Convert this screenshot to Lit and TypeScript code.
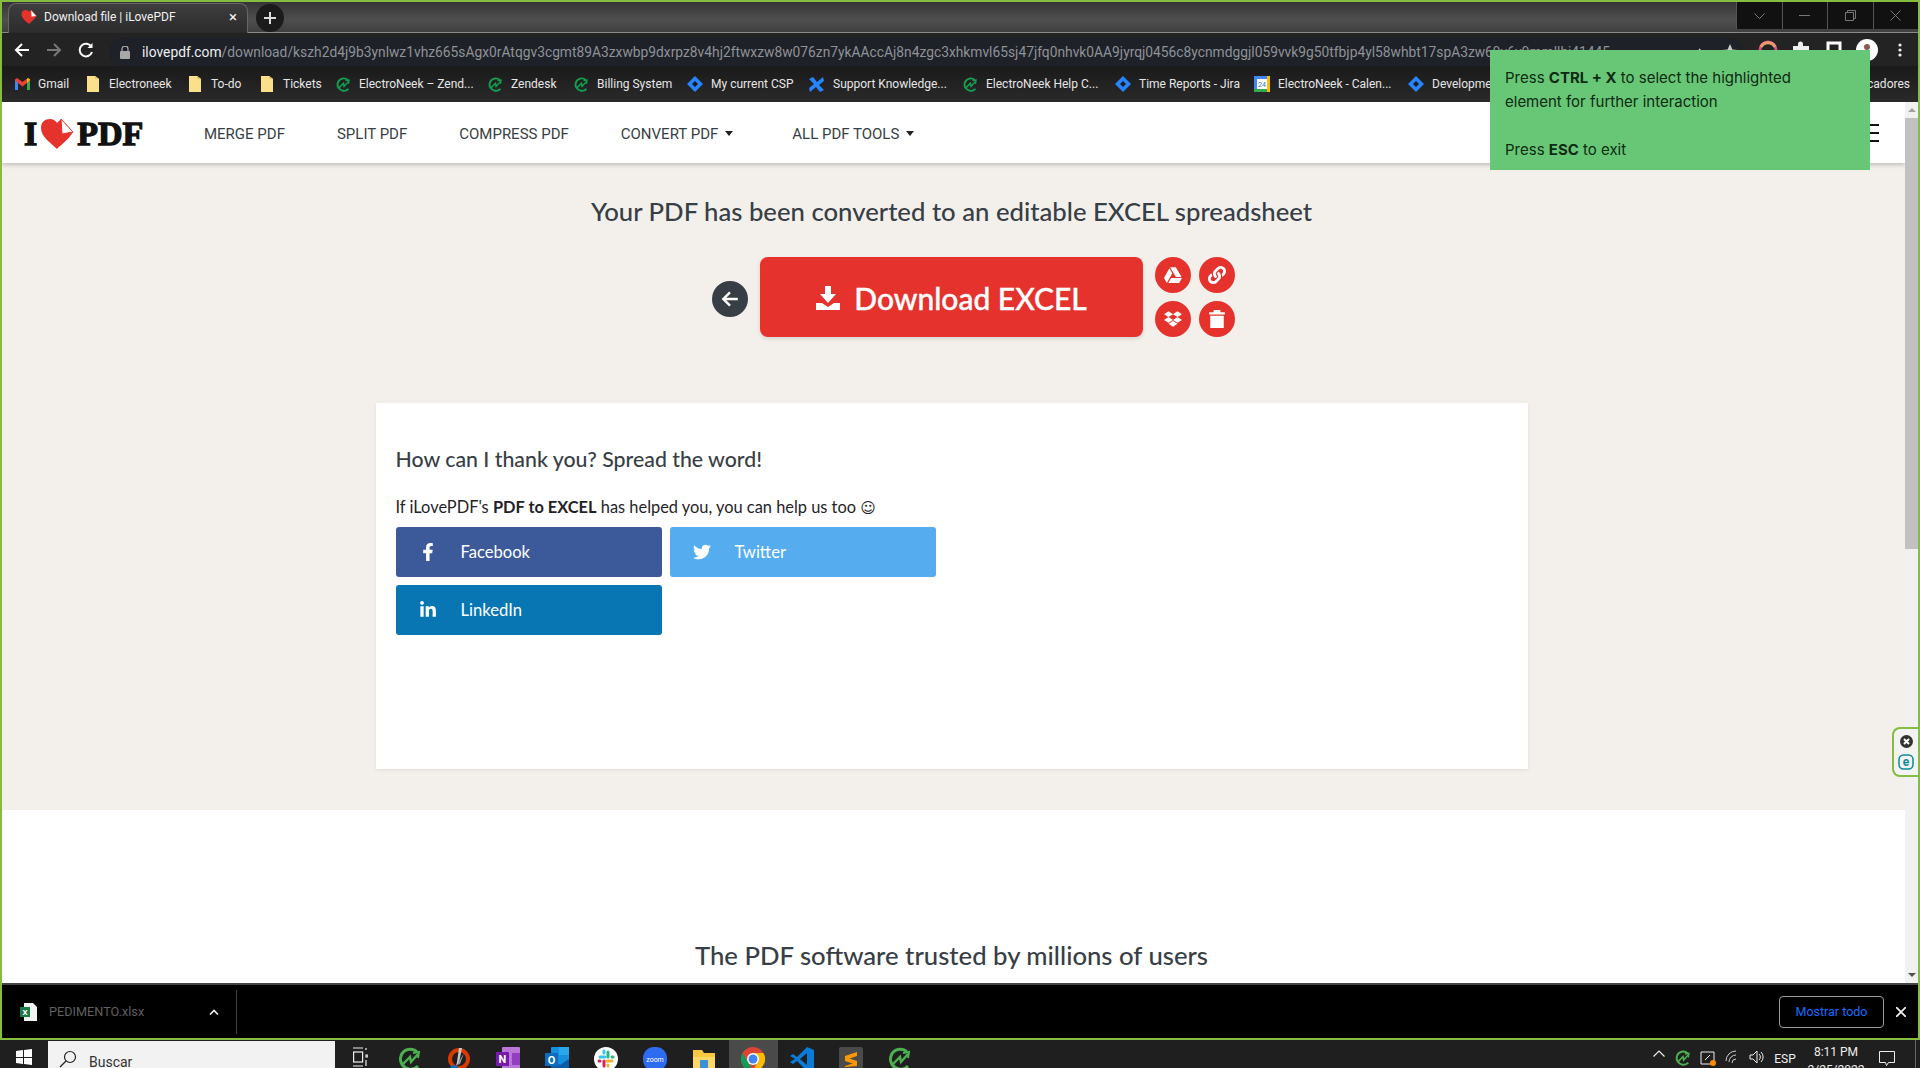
import { LitElement, html, css, svg } from 'lit';
import { customElement } from 'lit/decorators.js';

const URL_PATH =
  '/download/kszh2d4j9b3ynlwz1vhz665sAgx0rAtqgv3cgmt89A3zxwbp9dxrpz8v4hj2ftwxzw8w076zn7ykAAccAj8n4zgc3xhkmvl65sj47jfq0nhvk0AA9jyrqj0456c8ycnmdggjl059vvk9g50tfbjp4yl58whbt17spA3zw69v6v9mmllhj41445';

const ICON_FB =
  'M279.14 288l14.22-92.66h-88.91v-60.13c0-25.35 12.42-50.06 52.24-50.06h40.42V6.26S260.43 0 225.36 0c-73.22 0-121.08 44.38-121.08 124.72v70.62H22.89V288h81.39v224h100.17V288z';
const ICON_TW =
  'M459.37 151.716c.325 4.548.325 9.097.325 13.645 0 138.72-105.583 298.558-298.558 298.558-59.452 0-114.68-17.219-161.137-47.106 8.447.974 16.568 1.299 25.34 1.299 49.055 0 94.213-16.568 130.274-44.832-46.132-.975-84.792-31.188-98.112-72.772 6.498.974 12.995 1.624 19.818 1.624 9.421 0 18.843-1.3 27.614-3.573-48.081-9.747-84.143-51.98-84.143-102.985v-1.299c13.969 7.797 30.214 12.67 47.431 13.319-28.264-18.843-46.781-51.005-46.781-87.391 0-19.492 5.197-37.36 14.294-52.954 51.655 63.675 129.3 105.258 216.365 109.807-1.624-7.797-2.599-15.918-2.599-24.04 0-57.828 46.782-104.934 104.934-104.934 30.213 0 57.502 12.67 76.67 33.137 23.715-4.548 46.456-13.32 66.599-25.34-7.798 24.366-24.366 44.833-46.132 57.827 21.117-2.273 41.584-8.122 60.426-16.243-14.292 20.791-32.161 39.308-52.628 54.253z';
const ICON_IN =
  'M100.28 448H7.4V148.9h92.88zM53.79 108.1C24.09 108.1 0 83.5 0 53.8a53.79 53.79 0 0 1 107.58 0c0 29.7-24.1 54.3-53.79 54.3zM447.9 448h-92.68V302.4c0-34.7-.7-79.2-48.29-79.2-48.29 0-55.69 37.7-55.69 76.7V448h-92.78V148.9h89.08v40.8h1.3c12.4-23.5 42.69-48.3 87.88-48.3 94 0 111.28 61.9 111.28 142.3V448z';
const ICON_DRIVE =
  'M339 314.9L175.4 32h161.2l163.6 282.9H339zm-137.5 23.6L120.9 480h310.5L512 338.5H201.5zM154.1 67.4L0 338.5 80.6 480 237 208.8 154.1 67.4z';
const ICON_DROPBOX =
  'M264.4 116.3l-132 84.3 132 84.3-132 84.3L0 284.1l132.3-84.3L0 116.3 132.3 32l132.1 84.3zM131.6 395.7l132-84.3 132 84.3-132 84.3-132-84.3zm132.8-111.6l132-84.3-132-83.6L395.7 32 528 116.3l-132.3 84.3L528 284.8l-132.3 84.3-131.3-85z';
const ICON_LINK =
  'M326.612 185.391c59.747 59.809 58.927 155.698.36 214.59-.11.12-.24.25-.36.37l-67.2 67.2c-59.27 59.27-155.699 59.262-214.96 0-59.27-59.26-59.27-155.7 0-214.96l37.106-37.106c9.84-9.84 26.786-3.3 27.294 10.606.648 17.722 3.826 35.527 9.69 52.721 1.986 5.822.567 12.262-3.783 16.612l-13.087 13.087c-28.026 28.026-28.905 73.66-1.155 101.96 28.024 28.579 74.086 28.749 102.325.51l67.2-67.19c28.191-28.191 28.073-73.757 0-101.83-3.701-3.694-7.429-6.564-10.341-8.569a16.037 16.037 0 0 1-6.947-12.606c-.396-10.567 3.348-21.456 11.698-29.806l21.054-21.055c5.521-5.521 14.182-6.199 20.584-1.731a152.482 152.482 0 0 1 20.522 17.197zM467.547 44.449c-59.261-59.262-155.69-59.27-214.96 0l-67.2 67.2c-.12.12-.25.25-.36.37-58.566 58.892-59.387 154.781.36 214.59a152.454 152.454 0 0 0 20.521 17.196c6.402 4.468 15.064 3.789 20.584-1.731l21.054-21.055c8.35-8.35 12.094-19.239 11.698-29.806a16.037 16.037 0 0 0-6.947-12.606c-2.912-2.005-6.64-4.875-10.341-8.569-28.073-28.073-28.191-73.639 0-101.83l67.2-67.19c28.239-28.239 74.3-28.069 102.325.51 27.75 28.3 26.872 73.934-1.155 101.96l-13.087 13.087c-4.35 4.35-5.769 10.79-3.783 16.612 5.864 17.194 9.042 34.999 9.69 52.721.509 13.906 17.454 20.446 27.294 10.606l37.106-37.106c59.271-59.259 59.271-155.699.001-214.959z';

const heart = (s: number) => html`<svg width=${s} height=${s} viewBox="0 0 34 34">
  <path d="M17 32 C11 26 1 20 1 11 C1 5 5 2 10 2 C13 2 16 4 17 6 L21 2 L33 15 C29 22 22 27 17 32Z" fill="#e5322d"/>
  <path d="M21 2 L33 15 L22 17Z" fill="#fff" stroke="#e5322d" stroke-width="1"/>
</svg>`;

const neek = (s: number, c: string) => html`<svg width=${s} height=${s} viewBox="0 0 24 24" fill="none" stroke=${c} stroke-width="3">
  <path d="M19 5 C14 0 5 2 3 9 C1 15 5 21 11 22 C15 23 18 21 20 19"/>
  <path d="M5 17 L12 10 L13 15 L20 7" stroke-width="2.4"/>
  <path d="M15 6 L21 5 L20 11" stroke-width="2"/>
</svg>`;

const folder = html`<svg class="wide" width="12" height="18" viewBox="0 0 12 18"><path d="M0 1h8l4 3v13H0z" fill="#fbe08b"/><path d="M8 1v3h4z" fill="#e8c766"/></svg>`;
const diamond = html`<svg width="16" height="16" viewBox="0 0 16 16"><path d="M8 0l8 8-8 8-8-8z" fill="#2684ff"/><path d="M8 5l3 3-3 3-3-3z" fill="#1b1b1b"/></svg>`;
const gmail = html`<svg width="15" height="12" viewBox="0 0 15 12"><path d="M0 1.5V12h3V5l4.5 3.5L12 5v7h3V1.5L13 0 7.5 4 2 0z" fill="#ea4335"/><path d="M0 2v10h3V5z" fill="#4285f4"/><path d="M12 5v7h3V2z" fill="#34a853"/><path d="M13 0l2 1.5V2l-3 3V1z" fill="#fbbc04"/></svg>`;
const confluence = html`<svg width="17" height="17" viewBox="0 0 17 17"><path d="M1 3l4-2 4 5 6-5 1 4-5 4 5 5-4 2-4-5-6 5-1-4 5-4z" fill="#2684ff"/></svg>`;
const calendar = html`<svg width="16" height="16" viewBox="0 0 16 16"><rect width="16" height="16" fill="#4285f4"/><rect x="3" y="3" width="10" height="10" fill="#fff"/><rect x="13" width="3" height="16" fill="#fbbc04"/><rect y="13" width="13" height="3" fill="#34a853"/><text x="8" y="11" font-size="7" font-family="Roboto" fill="#1a73e8" text-anchor="middle">24</text></svg>`;

const BOOKMARKS = [
  { w: 72, icon: gmail, label: 'Gmail' },
  { w: 102, icon: folder, label: 'Electroneek' },
  { w: 72, icon: folder, label: 'To-do' },
  { w: 75, icon: folder, label: 'Tickets' },
  { w: 152, icon: neek(15, '#12a150'), label: 'ElectroNeek – Zend...' },
  { w: 86, icon: neek(15, '#12a150'), label: 'Zendesk' },
  { w: 113, icon: neek(15, '#12a150'), label: 'Billing System' },
  { w: 121, icon: diamond, label: 'My current CSP' },
  { w: 155, icon: confluence, label: 'Support Knowledge...' },
  { w: 152, icon: neek(15, '#12a150'), label: 'ElectroNeek Help C...' },
  { w: 139, icon: diamond, label: 'Time Reports - Jira' },
  { w: 154, icon: calendar, label: 'ElectroNeek - Calen...' },
  { w: 58, icon: diamond, label: 'Development' },
];

const TASK_ICONS = [
  neek(24, '#4caf50'),
  html`<svg width="24" height="24" viewBox="0 0 24 24"><circle cx="12" cy="12" r="9" fill="none" stroke="#d83b01" stroke-width="4"/><path d="M15 1l-3 15-3 3 1-4 2-14z" fill="#c8c8c8"/><path d="M17 6l-4 11-3 1z" fill="#9a9a9a"/><circle cx="7" cy="22" r="4" fill="#0f6cbd"/></svg>`,
  html`<svg width="24" height="24" viewBox="0 0 24 24"><rect x="6" width="18" height="24" rx="1" fill="#ba77d8"/><rect x="16" y="6" width="8" height="12" fill="#8f3fc0"/><rect y="5" width="13" height="14" fill="#7719aa"/><text x="6.5" y="16" font-size="11" font-weight="700" font-family="Roboto" fill="#fff" text-anchor="middle">N</text></svg>`,
  html`<svg width="24" height="24" viewBox="0 0 24 24"><rect x="6" width="18" height="24" rx="1" fill="#1490df"/><rect x="14" y="0" width="10" height="8" fill="#28a8ea"/><path d="M6 12l9 6 9-6v12H6z" fill="#0a5da8"/><rect y="6" width="13" height="13" fill="#0f6cbd"/><text x="6.5" y="17" font-size="11" font-weight="700" font-family="Roboto" fill="#fff" text-anchor="middle">O</text></svg>`,
  html`<svg width="24" height="24" viewBox="0 0 24 24"><circle cx="12" cy="12" r="12" fill="#fff"/><path d="M6 10h5M10 4v2" stroke="#36c5f0" stroke-width="3" stroke-linecap="round"/><path d="M14 5v5M18 10h1" stroke="#2eb67d" stroke-width="3" stroke-linecap="round"/><path d="M13 14h5M14 19v-1" stroke="#ecb22e" stroke-width="3" stroke-linecap="round"/><path d="M10 14v5M5 14h1" stroke="#e01e5a" stroke-width="3" stroke-linecap="round"/></svg>`,
  html`<svg width="24" height="24" viewBox="0 0 24 24"><rect x="0" y="0" width="24" height="24" rx="11" fill="#2d6bf0"/><text x="12" y="15" font-size="7" font-family="Roboto" fill="#fff" text-anchor="middle">zoom</text></svg>`,
  html`<svg width="24" height="24" viewBox="0 0 24 24"><path d="M1 3h9l2 3h11v18H1z" fill="#f8c940"/><rect x="1" y="10" width="22" height="14" fill="#ffd966"/><rect x="8" y="13" width="8" height="8" fill="#3a8fd8"/></svg>`,
  html`<svg width="24" height="24" viewBox="0 0 24 24"><circle cx="12" cy="12" r="12" fill="#db4437"/><path d="M12 24a12 12 0 0 1-10.4-18l6 10.4z" fill="#0f9d58"/><path d="M12 24a12 12 0 0 0 10.4-18H12l4.4 9z" fill="#fbbc04"/><circle cx="12" cy="12" r="6" fill="#fff"/><circle cx="12" cy="12" r="4.5" fill="#4285f4"/></svg>`,
  html`<svg width="24" height="24" viewBox="0 0 24 24"><path d="M17 0l7 3v18l-7 3L7 14l-4 3-3-2 5-3-5-3 3-2 4 3z" fill="#0a7bd6"/><path d="M17 6l-7 6 7 6z" fill="#1f1f1f"/></svg>`,
  html`<svg width="24" height="24" viewBox="0 0 24 24"><rect width="24" height="24" rx="2" fill="#4a4a4a"/><path d="M6 9l12-4v4L6 13zM6 10l12 4v4L6 14zM6 19l12-4v4l-12 1z" fill="#ff9800"/></svg>`,
  neek(24, '#4caf50'),
];

const icon = (d: string, box: string, cls = '') =>
  html`<svg class=${cls} viewBox=${box} fill="currentColor">${svg`<path d=${d}/>`}</svg>`;

@customElement('app-root')
export class AppRoot extends LitElement {
  static styles = css`
    :host {
      display: flex;
      flex-direction: column;
      width: 1920px;
      height: 1068px;
      overflow: hidden;
      font-family: Roboto, sans-serif;
      background: #000;
    }
    .window {
      position: relative;
      height: 1040px;
      box-sizing: border-box;
      border: 2px solid #84bd3f;
      display: flex;
      flex-direction: column;
      flex: none;
    }

    /* tab strip */
    .tabstrip {
      height: 31px;
      flex: none;
      display: flex;
      background: linear-gradient(#353535, #4f4f4f 60%, #3f3f3f);
      border-bottom: 1px solid #8a8a8a;
      box-sizing: border-box;
    }
    .tab {
      margin: 1px 0 -1px 6px;
      width: 240px;
      box-sizing: border-box;
      background: linear-gradient(#3e3e3e, #2b2b2b);
      border-radius: 8px 8px 0 0;
      border: 1px solid #666;
      border-bottom: none;
      display: flex;
      align-items: center;
      padding: 0 0 3px 12px;
      gap: 7px;
      color: #f1f1f1;
      font-size: 12px;
    }
    .tab .x {
      margin-left: auto;
      margin-right: 10px;
      font-size: 15px;
    }
    .newtab {
      margin: 2px 0 0 8px;
      width: 28px;
      height: 28px;
      border-radius: 50%;
      background: #1b1b1b;
      color: #ddd;
      display: flex;
      align-items: center;
      justify-content: center;
    }
    .wincontrols {
      margin-left: auto;
      display: flex;
      height: 27px;
      background: #111;
      color: #777;
    }
    .wincontrols span {
      width: 45.5px;
      box-sizing: border-box;
      border-left: 1px solid #555;
      display: flex;
      align-items: center;
      justify-content: center;
    }

    /* toolbar */
    .toolbar {
      height: 33px;
      flex: none;
      display: flex;
      align-items: center;
      background: #232323;
      padding-left: 4px;
      color: #eee;
    }
    .tbtn {
      width: 32px;
      display: flex;
      justify-content: center;
    }
    .address {
      margin-left: 7px;
      width: 1634px;
      height: 28px;
      margin-top: 5px;
      align-self: flex-start;
      border-radius: 14px;
      background: #1e2127;
      display: flex;
      align-items: center;
      gap: 14px;
      padding: 0 5px 0 11px;
      box-sizing: border-box;
      overflow: hidden;
    }
    .url {
      margin: 0 auto 0 -2px;
      font-size: 13.8px;
      color: #8f9297;
      white-space: nowrap;
    }
    .url b {
      font-weight: 400;
      color: #eceff3;
    }
    .extras {
      flex: 1;
      display: flex;
      align-items: center;
      justify-content: flex-end;
      padding-right: 2px;
    }
    .ex {
      width: 33px;
      display: flex;
      justify-content: center;
    }

    /* bookmarks */
    .bookmarks {
      height: 36px;
      flex: none;
      display: flex;
      align-items: center;
      background: linear-gradient(#1a1a1a, #2a2a2a);
      color: #e6e6e6;
      font-size: 12px;
      padding-left: 13px;
      white-space: nowrap;
      overflow: hidden;
    }
    .bm {
      display: flex;
      align-items: center;
      gap: 8px;
      flex: none;
    }
    .bm svg {
      flex: none;
    }
    .bm svg.wide {
      margin-right: 2px;
    }
    .more {
      margin-left: auto;
      padding-right: 8px;
    }

    /* page */
    .main {
      flex: 1;
      min-height: 0;
      display: flex;
    }
    .page {
      flex: 1;
      min-width: 0;
      display: flex;
      flex-direction: column;
      background: #fff;
      overflow: hidden;
    }
    .scrollbar {
      width: 13px;
      background: #f1f1f1;
      display: flex;
      flex-direction: column;
      align-items: center;
      flex: none;
      box-sizing: border-box;
      padding: 6px 0;
    }
    .scrollbar .thumb {
      width: 13px;
      height: 431px;
      margin-top: 6px;
      background: #c1c1c1;
    }
    .arrow-up,
    .arrow-down {
      width: 0;
      height: 0;
      border-left: 4px solid transparent;
      border-right: 4px solid transparent;
    }
    .arrow-up {
      border-bottom: 4px solid #a3a3a3;
    }
    .arrow-down {
      border-top: 4px solid #505050;
      margin-top: auto;
    }
    nav {
      height: 61px;
      flex: none;
      background: #fff;
      box-shadow: 0 2px 4px rgba(0, 0, 0, 0.2);
      display: flex;
      align-items: center;
      padding: 2px 0 0 22px;
      box-sizing: border-box;
      position: relative;
      color: #383e45;
      font-size: 15px;
    }
    .logo {
      display: flex;
      align-items: center;
      width: 180px;
      font-family: 'Liberation Serif', serif;
      font-weight: 700;
      font-size: 34px;
      color: #111;
      -webkit-text-stroke: 1.3px #111;
      line-height: 1;
    }
    .logo svg {
      margin: 0 3px 0 3px;
    }
    .links {
      display: flex;
      gap: 52px;
    }
    .links span {
      display: flex;
      align-items: center;
      gap: 7px;
    }
    .links span.caret {
      margin-right: 7px;
    }
    .links i {
      width: 0;
      height: 0;
      border-left: 4px solid transparent;
      border-right: 4px solid transparent;
      border-top: 5px solid #222;
    }
    .burger {
      position: absolute;
      right: 26px;
      top: 22px;
      width: 12px;
      height: 18px;
      box-sizing: border-box;
      border-top: 2px solid #111;
      border-bottom: 2px solid #111;
    }
    .burger::after {
      content: '';
      display: block;
      height: 2px;
      margin-top: 6px;
      background: #111;
    }
    .hero {
      flex: none;
      height: 647px;
      box-sizing: border-box;
      background: #f3f0ec;
      padding: 32px 4px 0 0;
      display: flex;
      flex-direction: column;
      align-items: center;
      color: #383e45;
      font-family: Lato, sans-serif;
    }
    h1 {
      margin: 0;
      font-size: 25.7px;
      line-height: 32px;
      font-weight: 500;
    }
    .actions {
      margin-top: 30px;
      display: grid;
      width: 100%;
      grid-template-columns: 1fr 383px 1fr;
      align-items: center;
    }
    .back {
      justify-self: end;
      margin: 4px 12px 0 0;
      width: 36px;
      height: 36px;
      border-radius: 50%;
      background: #383e45;
      color: #fff;
      display: flex;
      align-items: center;
      justify-content: center;
    }
    .download {
      height: 80px;
      box-sizing: border-box;
      padding-top: 1px;
      border-radius: 8px;
      background: #e5322d;
      color: #fff;
      box-shadow: 0 2px 4px rgba(0, 0, 0, 0.12);
      display: flex;
      align-items: center;
      justify-content: center;
      gap: 14px;
      font-size: 30px;
      font-weight: 500;
      -webkit-text-stroke: 0.4px #fff;
    }
    .side {
      display: grid;
      grid-template-columns: 36px 36px;
      gap: 8px;
      margin-left: 12px;
      width: max-content;
    }
    .side span {
      width: 36px;
      height: 36px;
      border-radius: 50%;
      background: #e5322d;
      color: #fff;
      display: flex;
      align-items: center;
      justify-content: center;
    }
    .side svg {
      width: 18px;
      height: 18px;
    }
    .card {
      margin-top: 66px;
      width: 1152px;
      height: 366px;
      box-sizing: border-box;
      background: #fff;
      box-shadow: 0 1px 3px rgba(0, 0, 0, 0.08);
      padding: 42px 20px 0;
    }
    h2 {
      margin: 0;
      font-size: 21.3px;
      line-height: 28px;
      font-weight: 500;
    }
    .card p {
      margin: 24px 0 9px;
      font-size: 16.4px;
      line-height: 20px;
      color: #1f2328;
      white-space: nowrap;
    }
    .smile {
      font-family: 'DejaVu Sans', sans-serif;
      font-size: 15px;
    }
    .shares {
      display: flex;
      flex-wrap: wrap;
      gap: 8px;
      width: 560px;
    }
    .share {
      width: 266px;
      height: 50px;
      border-radius: 3px;
      color: #fff;
      display: flex;
      align-items: center;
      font-size: 16.6px;
    }
    .share .ic {
      width: 65px;
      display: flex;
      justify-content: center;
    }
    .share svg {
      height: 18px;
      width: 18px;
    }
    .fb {
      background: #3c5a99;
    }
    .tw {
      background: #55acee;
    }
    .li {
      background: #0976b4;
    }
    .trusted {
      flex: 1;
      background: #fff;
      font-family: Lato, sans-serif;
      color: #383e45;
      text-align: center;
      padding: 129px 4px 0 0;
    }

    /* download shelf */
    .shelf {
      height: 53px;
      flex: none;
      background: #000;
      border-top: 2px solid #444;
      display: flex;
      align-items: center;
      color: #5f5f5f;
      font-size: 12.7px;
      padding-left: 18px;
    }
    .shelf .name {
      margin-left: 12px;
      width: 160px;
    }
    .shelf .sep {
      width: 1px;
      height: 44px;
      background: #444;
      margin-left: 17px;
    }
    .all {
      margin-left: auto;
      width: 105px;
      height: 32px;
      box-sizing: border-box;
      border: 1px solid #9a9a9a;
      border-radius: 4px;
      color: #1a6bff;
      display: flex;
      align-items: center;
      justify-content: center;
      font-size: 12.5px;
    }
    .shelfx {
      color: #eee;
      width: 34px;
      display: flex;
      justify-content: center;
    }

    /* taskbar */
    .taskbar {
      height: 28px;
      flex: none;
      background: #1f1f1f;
      display: flex;
      overflow: hidden;
      color: #eee;
    }
    .start {
      width: 48px;
      display: flex;
      justify-content: center;
      padding-top: 9px;
      box-sizing: border-box;
    }
    .search {
      width: 287px;
      margin-top: 1px;
      background: #f2f2f2;
      color: #333;
      display: flex;
      gap: 12px;
      padding: 9px 0 0 11px;
      box-sizing: border-box;
      font-size: 14px;
      line-height: 24px;
    }
    .slot {
      width: 50px;
      height: 40px;
      display: flex;
      justify-content: center;
      padding-top: 7px;
      box-sizing: border-box;
      flex: none;
    }
    .slot.app {
      width: 49.1px;
    }
    .slot.active {
      background: #4a4a4a;
    }
    .tray {
      margin-left: auto;
      display: flex;
      font-size: 12px;
      align-items: flex-start;
      padding-top: 5px;
      color: #eee;
    }
    .tray .t {
      width: 24.5px;
      display: flex;
      justify-content: center;
      padding-top: 5px;
    }
    .tray .esp {
      width: 32px;
      padding-top: 7px;
      text-align: center;
    }
    .tray .clock {
      width: 70px;
      text-align: center;
      line-height: 18px;
      margin-top: -2px;
    }
    .tray .notif {
      width: 44px;
      display: flex;
      padding: 6px 0 0 8px;
      box-sizing: border-box;
    }
    .tray .edge {
      width: 1px;
      height: 28px;
      margin: -5px 4px 0 0;
      background: #666;
    }

    /* overlays */
    .note {
      position: absolute;
      left: 1488px;
      top: 48px;
      width: 380px;
      height: 120px;
      box-sizing: border-box;
      background: #68c777;
      color: #0d2a12;
      padding: 16px 60px 16px 15px;
      font: 400 15px/24px Inter, sans-serif;
      z-index: 2;
    }
    .eset {
      position: absolute;
      right: 0;
      top: 725px;
      width: 26px;
      height: 50px;
      box-sizing: border-box;
      border: 2px solid #84bd3f;
      border-right: none;
      border-radius: 8px 0 0 8px;
      background: #f3f3f3;
      display: flex;
      flex-direction: column;
      align-items: center;
      gap: 6px;
      padding-top: 6px;
      z-index: 2;
    }
  `;

  render() {
    return html`
      <div class="window">
        <div class="tabstrip">
          <div class="tab">
            ${heart(16)}<span>Download file | iLovePDF</span><span class="x">×</span>
          </div>
          <div class="newtab">
            <svg width="12" height="12" viewBox="0 0 12 12" stroke="currentColor" stroke-width="2"><path d="M6 0v12M0 6h12"/></svg>
          </div>
          <div class="wincontrols">
            <span><svg width="11" height="6" viewBox="0 0 11 6" fill="none" stroke="currentColor"><path d="M.5.5l5 5 5-5"/></svg></span>
            <span><svg width="11" height="1" viewBox="0 0 11 1" stroke="currentColor"><path d="M0 .5h11"/></svg></span>
            <span><svg width="11" height="11" viewBox="0 0 11 11" fill="none" stroke="currentColor"><path d="M.5 2.5h8v8h-8zM2.5 2.5v-2h8v8h-2"/></svg></span>
            <span><svg width="11" height="11" viewBox="0 0 11 11" stroke="currentColor"><path d="M.5.5l10 10M10.5.5l-10 10"/></svg></span>
          </div>
        </div>

        <div class="toolbar">
          <span class="tbtn"><svg width="16" height="16" viewBox="0 0 16 16" fill="none" stroke="#fff" stroke-width="2"><path d="M15 8H2M8 2L2 8l6 6"/></svg></span>
          <span class="tbtn"><svg width="16" height="16" viewBox="0 0 16 16" fill="none" stroke="#777" stroke-width="2"><path d="M1 8h13M8 2l6 6-6 6"/></svg></span>
          <span class="tbtn"><svg width="16" height="16" viewBox="0 0 16 16" fill="none" stroke="#fff" stroke-width="2"><path d="M13.5 5A6.3 6.3 0 1 0 14 10"/><path d="M14.5 1v5h-5" fill="#fff" stroke="none"/></svg></span>
          <div class="address">
            <svg style="flex:none" width="10" height="13" viewBox="0 0 10 13" fill="#a8a8a8"><rect y="5" width="10" height="8" rx="1"/><path d="M2 5V3a3 3 0 0 1 6 0v2" fill="none" stroke="#a8a8a8" stroke-width="1.3"/></svg>
            <span class="url"><b>ilovepdf.com</b>${URL_PATH}</span>
            <svg style="flex:none" width="16" height="16" viewBox="0 0 16 16" fill="none" stroke="#ccc" stroke-width="1.5"><path d="M2 14V9h8M7 5l4 4-4 4"/></svg>
            <svg style="flex:none" width="16" height="16" viewBox="0 0 16 16" fill="#ccc"><path d="M8 0l2.4 5.4 5.6.6-4.2 3.8 1.2 5.7L8 12.6 3 15.5l1.2-5.7L0 6l5.6-.6z"/></svg>
          </div>
          <div class="extras">
            <span class="ex"><svg width="20" height="20" viewBox="0 0 20 20" fill="none" stroke-width="3"><circle cx="10" cy="10" r="8" stroke="#d8508e"/><path d="M3 7a8 8 0 0 1 14 0" stroke="#ea9b6a"/></svg></span>
            <span class="ex"><svg width="18" height="18" viewBox="0 0 18 18" fill="#eee"><path d="M1 5h5V3a2 2 0 0 1 5 0v2h6v12H1z"/></svg></span>
            <span class="ex"><svg width="16" height="18" viewBox="0 0 16 18" fill="none" stroke="#fff" stroke-width="3"><rect x="2" y="2" width="12" height="14"/></svg></span>
            <span class="ex"><svg width="22" height="22" viewBox="0 0 22 22"><circle cx="11" cy="11" r="11" fill="#fff"/><circle cx="11" cy="8" r="3" fill="#8a5a50"/></svg></span>
            <span class="ex"><svg width="4" height="14" viewBox="0 0 4 14" fill="#eee"><circle cx="2" cy="2" r="1.6"/><circle cx="2" cy="7" r="1.6"/><circle cx="2" cy="12" r="1.6"/></svg></span>
          </div>
        </div>

        <div class="bookmarks">
          ${BOOKMARKS.map(
            (b) => html`<span class="bm" style="width:${b.w}px">${b.icon}<span>${b.label}</span></span>`,
          )}
          <span class="more">cadores</span>
        </div>

        <div class="main">
          <div class="page">
            <nav>
              <div class="logo"><span>I</span>${heart(34)}<span>PDF</span></div>
              <div class="links">
                <span>MERGE PDF</span>
                <span>SPLIT PDF</span>
                <span>COMPRESS PDF</span>
                <span class="caret">CONVERT PDF<i></i></span>
                <span>ALL PDF TOOLS<i></i></span>
              </div>
              <div class="burger"></div>
            </nav>
            <div class="hero">
              <h1>Your PDF has been converted to an editable EXCEL spreadsheet</h1>
              <div class="actions">
                <div class="back">
                  <svg width="20" height="20" viewBox="0 0 18 18" fill="none" stroke="currentColor" stroke-width="2.2"><path d="M16 9H3M9 3L3 9l6 6"/></svg>
                </div>
                <div class="download">
                  <svg width="24" height="24" viewBox="0 0 24 24" fill="#fff"><path d="M9 0h6v8h5l-8 9-8-9h5zM0 17h6l6 4 6-4h6v7H0z"/></svg>
                  <span>Download EXCEL</span>
                </div>
                <div class="side">
                  <span>${icon(ICON_DRIVE, '0 0 512 512')}</span>
                  <span>${icon(ICON_LINK, '0 0 512 512')}</span>
                  <span>${icon(ICON_DROPBOX, '0 0 528 512')}</span>
                  <span><svg viewBox="0 0 16 16" fill="currentColor"><path d="M5 0h6v2h4v2H1V2h4zM2 5h12v11H2z"/></svg></span>
                </div>
              </div>
              <div class="card">
                <h2>How can I thank you? Spread the word!</h2>
                <p>If iLovePDF's <b>PDF to EXCEL</b> has helped you, you can help us too <span class="smile">☺</span></p>
                <div class="shares">
                  <div class="share fb"><span class="ic">${icon(ICON_FB, '0 0 320 512')}</span>Facebook</div>
                  <div class="share tw"><span class="ic">${icon(ICON_TW, '0 0 512 512')}</span>Twitter</div>
                  <div class="share li"><span class="ic">${icon(ICON_IN, '0 0 448 512')}</span>LinkedIn</div>
                </div>
              </div>
            </div>
            <div class="trusted"><h1>The PDF software trusted by millions of users</h1></div>
          </div>
          <div class="scrollbar">
            <div class="arrow-up"></div>
            <div class="thumb"></div>
            <div class="arrow-down"></div>
          </div>
        </div>

        <div class="shelf">
          <svg width="17" height="18" viewBox="0 0 17 18"><path d="M4 0h9l4 4v14H4z" fill="#f2f2f2"/><rect y="4" width="10" height="10" fill="#1d7a45"/><text x="5" y="12" font-size="8" font-weight="700" font-family="Roboto" fill="#fff" text-anchor="middle">X</text></svg>
          <span class="name">PEDIMENTO.xlsx</span>
          <svg width="10" height="6" viewBox="0 0 10 6" fill="none" stroke="#eee" stroke-width="1.6"><path d="M1 5.5l4-4 4 4"/></svg>
          <span class="sep"></span>
          <span class="all">Mostrar todo</span>
          <span class="shelfx"><svg width="10" height="10" viewBox="0 0 10 10" stroke="currentColor" stroke-width="1.8"><path d="M0 0l10 10M10 0L0 10"/></svg></span>
        </div>

        <div class="note">
          Press <b>CTRL + X</b> to select the highlighted element for further interaction<br /><br />
          Press <b>ESC</b> to exit
        </div>
        <div class="eset">
          <svg width="13" height="13" viewBox="0 0 13 13"><circle cx="6.5" cy="6.5" r="6.5" fill="#333"/><path d="M4 4l5 5M9 4l-5 5" stroke="#fff" stroke-width="2"/></svg>
          <svg width="16" height="16" viewBox="0 0 16 16" fill="none"><rect x="1" y="1" width="14" height="14" rx="4.5" stroke="#0e8a96" stroke-width="1.5"/><text x="8" y="12" font-size="12" font-weight="700" font-family="Roboto" fill="#0e8a96" text-anchor="middle">e</text></svg>
        </div>
      </div>

      <div class="taskbar">
        <div class="start">
          <svg width="16" height="16" viewBox="0 0 16 16" fill="#fff"><path d="M0 2l7-1v7H0zM8 1l8-1v8H8zM0 9h7v6l-7-1zM8 9h8v7l-8-1z"/></svg>
        </div>
        <div class="search">
          <svg width="18" height="18" viewBox="0 0 18 18" fill="none" stroke="#222" stroke-width="1.2"><circle cx="11" cy="7" r="5.5"/><path d="M7 11l-6 6"/></svg>
          <span>Buscar</span>
        </div>
        <div class="slot">
          <svg width="15" height="20" viewBox="0 0 15 20" fill="none" stroke="#eee" stroke-width="1.2"><path d="M0 1h10M0 19h10"/><rect x=".6" y="5" width="9" height="10"/><path d="M13 1v2M13 8h2v2h-2zM13 13v6"/></svg>
        </div>
        ${TASK_ICONS.map((t, i) => html`<div class="slot app ${i === 7 ? 'active' : ''}">${t}</div>`)}
        <div class="tray">
          <span class="t"><svg width="12" height="7" viewBox="0 0 12 7" fill="none" stroke="#eee" stroke-width="1.2"><path d="M.5 6.5L6 1l5.5 5.5"/></svg></span>
          <span class="t">${neek(16, '#4caf50')}</span>
          <span class="t"><svg width="16" height="16" viewBox="0 0 16 16" fill="none" stroke="#eee"><path d="M1 2h13v12H1z"/><path d="M5 10l5-5"/><circle cx="13" cy="13" r="3" fill="#ff8c00" stroke="none"/></svg></span>
          <span class="t"><svg width="14" height="14" viewBox="0 0 14 14" fill="none" stroke="#ccc"><path d="M1 11a10 10 0 0 1 10-10M4 12a7 7 0 0 1 7-7M7 13a4 4 0 0 1 4-4"/></svg></span>
          <span class="t"><svg width="16" height="14" viewBox="0 0 16 14" fill="none" stroke="#eee"><path d="M1 5h3l4-4v12L4 9H1zM10 4a4 4 0 0 1 0 6M12 2a7 7 0 0 1 0 10"/></svg></span>
          <span class="esp">ESP</span>
          <span class="clock">8:11 PM<br />2/25/2022</span>
          <span class="notif"><svg width="16" height="16" viewBox="0 0 16 16" fill="none" stroke="#eee"><path d="M.5.5h15v11h-6l-2 3-1-3h-6z"/></svg></span>
          <span class="edge"></span>
        </div>
      </div>
    `;
  }
}
